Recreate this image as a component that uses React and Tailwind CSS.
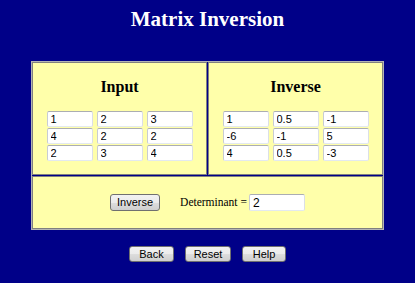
const inputMatrix = [
  ['1', '2', '3'],
  ['4', '2', '2'],
  ['2', '3', '4'],
];

const inverseMatrix = [
  ['1', '0.5', '-1'],
  ['-6', '-1', '5'],
  ['4', '0.5', '-3'],
];

const fieldClass =
  "h-[16px] px-[3px] text-[11px] text-black bg-white border border-t-[#abadb3] border-l-[#c8ccd4] border-r-[#dbdfe6] border-b-[#e3e9ef] rounded-[2px] outline-none font-['Liberation_Sans',Arial,sans-serif]";

const buttonClass =
  "h-[16px] border border-[#707070] rounded-[3px] bg-[linear-gradient(to_bottom,#f2f2f2_0%,#ebebeb_50%,#dddddd_51%,#cfcfcf_100%)] text-[11px] leading-none text-black font-['Liberation_Sans',Arial,sans-serif]";

const MatrixCell = ({ title, values }) => (
  <div className="bg-[#ffffaa] border border-[#808080] h-[113px] pt-[15px] flex flex-col items-center">
    <h3 className="text-[16px] leading-[18px] font-bold text-black">{title}</h3>
    <div className="mt-[15px] grid grid-cols-3 gap-x-[4px] gap-y-[1px]">
      {values.flat().map((v, i) => (
        <input key={i} readOnly value={v} className={`${fieldClass} w-[46px]`} />
      ))}
    </div>
  </div>
);

const App = () => {
  return (
    <div className="w-[415px] h-[283px] bg-[#000088] font-['Liberation_Serif','Times_New_Roman',serif] overflow-hidden">
      <h1 className="pt-[7px] text-center text-white font-bold text-[21px] leading-[24px]">
        Matrix Inversion
      </h1>

      {/* Main table */}
      <div className="mx-auto mt-[30px] w-[353px] border border-[#b4b4b4] grid grid-cols-2 gap-[1px] bg-[#000088]">
        <MatrixCell title="Input" values={inputMatrix} />
        <MatrixCell title="Inverse" values={inverseMatrix} />
        <div className="col-span-2 bg-[#ffffaa] border border-[#808080] h-[53px] flex items-center justify-center">
          <button className={`${buttonClass} w-[50px] h-[17px]`}>Inverse</button>
          <span className="ml-[20px] text-[11.5px] text-black">Determinant =</span>
          <input readOnly value="2" className={`${fieldClass} ml-[2px] w-[56px] h-[17px] text-[12px]`} />
        </div>
      </div>

      {/* Bottom buttons */}
      <div className="mt-[16px] flex justify-center gap-[11px]">
        <button className={`${buttonClass} w-[45px]`}>Back</button>
        <button className={`${buttonClass} w-[46px]`}>Reset</button>
        <button className={`${buttonClass} w-[44px]`}>Help</button>
      </div>
    </div>
  );
};

export default App;
